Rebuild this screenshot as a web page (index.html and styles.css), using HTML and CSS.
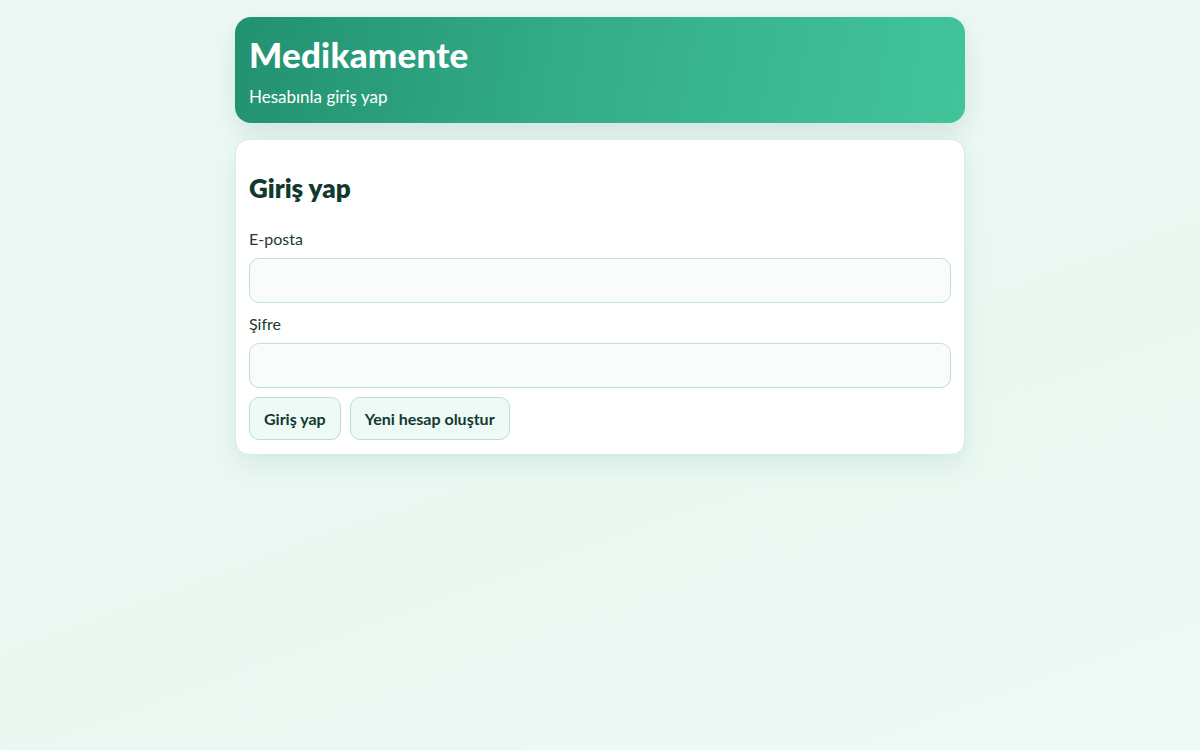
FILE: index.html
```html
<!DOCTYPE html>
<html lang="tr">
<head>
<meta charset="utf-8">
<title>Medikamente</title>
<link rel="stylesheet" href="styles.css">
</head>
<body>
<main class="wrap">
  <header class="hero">
    <h1 class="hero-title">Medikamente</h1>
    <p class="hero-sub">Hesabınla giriş yap</p>
  </header>
  <section class="card">
    <h2 class="card-title">Giriş yap</h2>
    <form class="form">
      <label class="label" for="email">E-posta</label>
      <input class="input" id="email" type="email">
      <label class="label" for="pw">Şifre</label>
      <input class="input" id="pw" type="password">
      <div class="actions">
        <button class="btn" type="button">Giriş yap</button>
        <button class="btn" type="button">Yeni hesap oluştur</button>
      </div>
    </form>
  </section>
</main>
</body>
</html>
```
FILE: styles.css
```css
* { box-sizing: border-box; }
html, body { height: 100%; }
body {
  margin: 0;
  font-family: Lato, "Noto Sans", sans-serif;
  color: #17382f;
  background: linear-gradient(160deg, #eef9f6 0%, #ebf8f2 60%, #eefaf5 100%);
}
.wrap {
  width: 730px;
  margin: 17px auto 0;
  display: flex;
  flex-direction: column;
  gap: 16px;
}
.hero {
  border-radius: 16px;
  padding: 18px 14px 15px;
  color: #fff;
  background: linear-gradient(100deg, #22916f 0%, #33ac88 45%, #42c49b 100%);
  box-shadow: 0 10px 26px rgba(30, 110, 85, 0.14);
}
.hero-title {
  margin: 0;
  font-size: 35px;
  line-height: 38px;
  font-weight: 900;
  letter-spacing: 0.2px;
}
.hero-sub {
  margin: 13px 0 0;
  font-size: 17px;
  line-height: 22px;
}
.card {
  background: #fff;
  border: 1px solid #d6ebe4;
  border-radius: 14px;
  padding: 13px 13px 14px;
  box-shadow: 0 10px 26px rgba(30, 110, 85, 0.10);
}
.card-title {
  margin: 20px 0 0;
  font-size: 26px;
  line-height: 30px;
  font-weight: 800;
  color: #0f3a2d;
}
.form {
  display: flex;
  flex-direction: column;
  margin-top: 26px;
}
.label {
  font-size: 16px;
  line-height: 20px;
  color: #1d3a31;
}
.input {
  margin-top: 9px;
  height: 45px;
  border: 1px solid #bfe0d6;
  border-radius: 10px;
  background: #f9fcfb;
  font: inherit;
}
.input + .label { margin-top: 11px; }
.actions {
  display: flex;
  gap: 9px;
  margin-top: 9px;
}
.btn {
  height: 43px;
  padding: 0 14px;
  border: 1px solid #b9e0d3;
  border-radius: 10px;
  background: #eefaf5;
  color: #12392e;
  font-family: inherit;
  font-size: 16px;
  font-weight: 700;
}
```
